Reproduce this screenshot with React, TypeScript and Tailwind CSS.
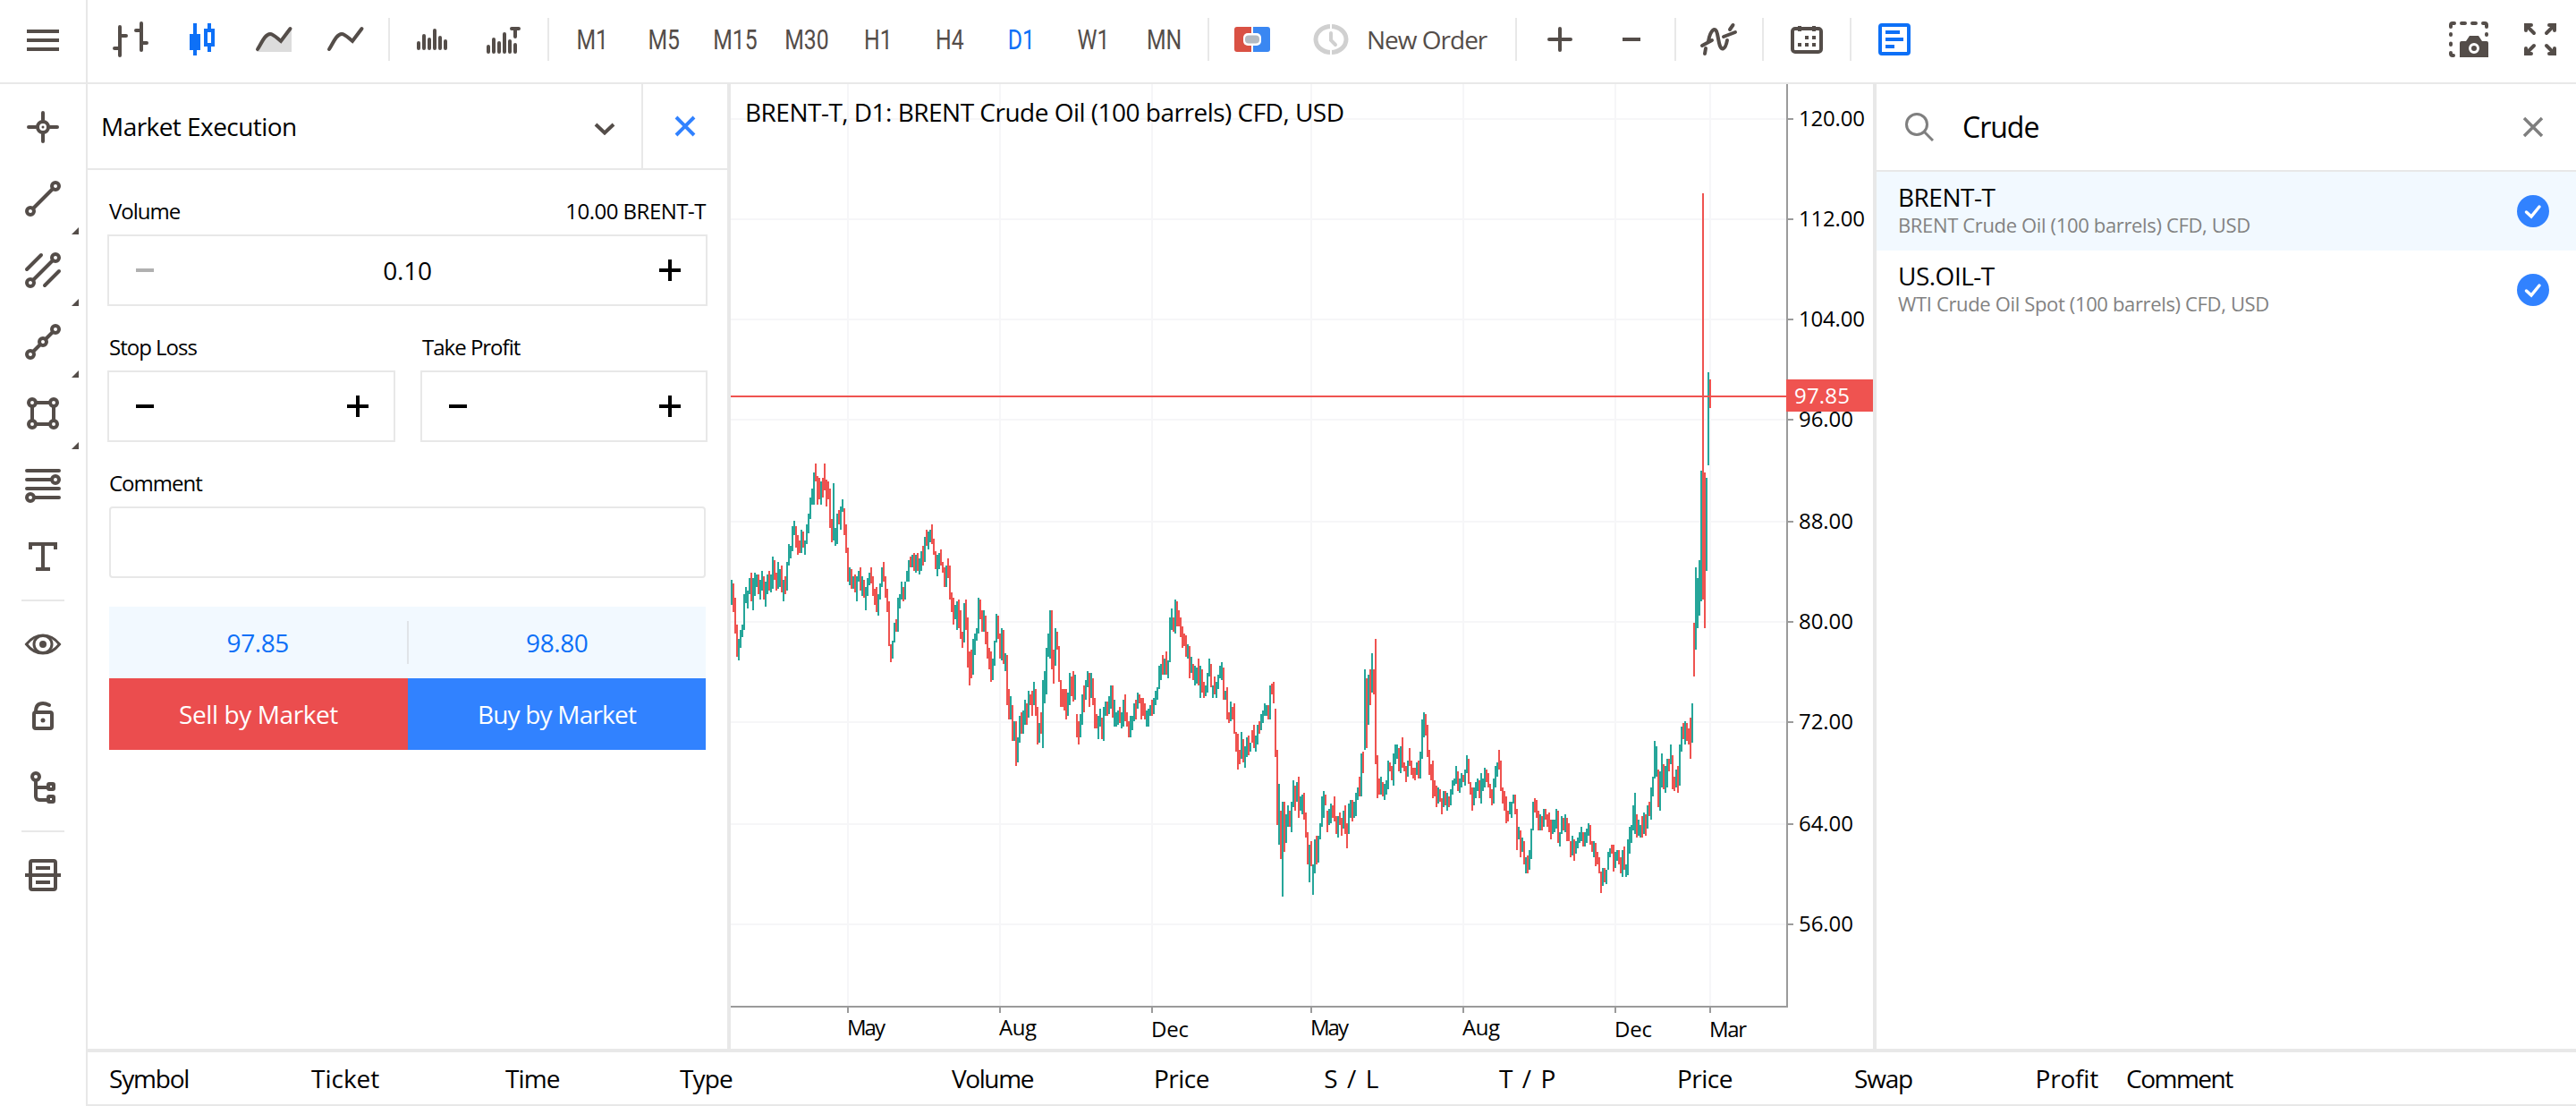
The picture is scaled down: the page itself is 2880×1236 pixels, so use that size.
import type { ReactNode } from "react";

type Segment = { x: number; y: number; bars: string };

// Daily bars, two pixels wide each. "g" closes up, "r" closes down; high and
// low are in thirds of a pixel below the segment's y.
const segments: Segment[] = [
  {
    x: 817,
    y: 480,
    bars: `g504:588 r516:612 r564:684 r654:762 g702:774 g672:732 g654:696 g552:672 g528:582 g540:600
      g498:552 r480:576 g498:606 g480:558 g486:528 r486:552 g504:570 g474:540 r492:570 g510:594
      g486:552 r474:540 g486:546 g426:534 r438:504 r480:540 g444:534 g468:528 r456:546 g504:576
      r492:552 g444:540 g384:456 g390:432 g324:408 g306:354 r324:396 r354:420 r372:414 g336:414
      r342:396 g372:420 g318:384 g282:348 g228:300 g198:252 g144:252 r114:174 r156:252 r162:234
      g174:252 r162:228 r114:204 r168:258 r174:234 r198:330 r300:378 g180:372 g330:390 g282:384
      r270:318 g258:336 g234:276 r264:354 r318:414 r396:510 g462:522 r468:534 g492:534 r486:546
      g492:576 g474:510 r462:540 g492:558 r504:564 g528:606 g498:558 g480:522 r462:516 r492:558
      r534:588 r528:612 g552:624 g516:570 g462:528 r444:510 r492:564 r534:612 r576:726 r720:780
      g708:768 g648:714 r636:678 g564:678 g552:600 g510:570 r528:576 g510:570 g474:510 g438:510
      r426:462 g420:462 r414:474 g420:480 r414:474 g432:486 g408:474 r390:456 g360:444 r336:390
      g342:402 g336:378 r318:384 r366:420 r408:468 g420:492 g414:468 r402:456 r444:480 r462:528
      g456:528 r432:498 r456:570 r546:612 r564:654 g588:636 g576:672 r570:666 r606:702 r678:732
      g582:714 r570:672 r630:798 r744:858 r738:834 g702:822 g684:756 g666:708 g564:684 r570:636
      r606:678 g606:678 r624:720 r678:768 r732:804 r744:846 g768:840 g708:792 g618:714 r624:702
      r684:768 g666:774 r672:786 g750:810 r756:924 r870:972 g894:972 r924:1044 g978:1044 r978:1128
      g1032:1116 g960:1050 r948:1020 g942:1020 g906:990 r918:990 g876:966 r888:924 r876:960 g846:924
      r870:960 r930:1056 g984:1050 r948:1020 g840:1068 g810:918 g732:888 g684:762 g606:768 r606:804
      r738:852 g666:792 r678:738 r726:846 r840:930 r870:930 r870:942 r870:972 g882:960 g816:924
      r828:894 r810:912 g822:906 r954:1032 r978:1056`,
  },
  {
    x: 1207,
    y: 640,
    bars: `g474:552 g408:510 r378:468 g360:426 g330:384 r336:450 g336:420 r354:444 r420:522 r474:522
      g480:558 g456:516 r486:558 g450:564 g432:480 r432:480 g414:474 g378:456 r378:486 g426:516
      g468:516 g462:510 r450:504 g468:522 g426:516 r408:498 r468:516 r498:552 g480:552 g480:528
      g438:498 r426:492 g402:456 r408:438 r420:492 r420:480 r438:492 g462:516 g456:516 g444:480
      r426:480 g420:474 g396:444 g384:426 g312:390 g306:360 r276:342 g288:342 r264:342 g294:354
      g150:300 g120:192 r150:198 g90:204 r96:180 r126:180 r150:216 r180:252 r204:246 r210:282
      g240:288 r246:354 g282:336 r306:360 g312:378 g318:372 r288:378 g312:420 r324:402 r366:420
      g378:414 g336:402 g288:348 r306:384 g378:420 r348:408 g366:420 g342:390 g312:354 g300:360
      r318:426 g396:426 r384:492 r468:504 g432:498 r450:492 r438:540 r534:600 r540:660 r594:642
      g534:624 r558:636 g582:654 g552:618 r546:612 g570:600 r528:570 r510:588 g546:600 g510:576
      r498:540 g474:528 g462:504 g438:480 g444:480 r444:492 g378:492 r372:408 r366:438 r456:618
      r594:846 g708:912 r798:960 g768:1086 r768:936 g810:906 g780:852 r798:852 g768:870 g696:786
      r714:798 g702:768 r684:822 g750:798 g744:810 r738:828 r804:888 r870:978 g912:1038 r900:984
      g978:1080 g894:1008 r882:978 g882:972 g840:894 g750:852 g732:822 r744:780 r798:870 g792:846
      g774:840 r780:822 r750:834 r816:876 g816:888 r804:846 r822:882 g798:858 r780:876 r840:924
      g774:876 g762:822 r762:834 g768:822 g738:816 g720:762 r684:750 g606:750 r600:672 g324:594
      r354:588 g342:510 r324:444 g270:402 r324:408 r222:642 r612:756 r690:744 g684:744 r702:750
      g708:762 g696:744`,
  },
  {
    x: 1551,
    y: 680,
    bars: `g510:606 r516:546 r528:576 g486:594 g456:522 g456:504 r468:546 g462:552 r432:534 r516:546
      r528:582 g510:564 r468:528 r510:558 r534:570 r534:576 g516:558 r510:570 g480:570 g372:504
      g348:432 r354:426 r390:498 r474:558 r522:576 r510:636 r576:630 r594:666 g600:654 r606:648
      r636:690 g612:666 r612:660 g618:678 r630:666 g606:660 g576:624 g570:594 g528:588 r546:612
      g570:618 g552:600 r558:582 g540:594 g492:552 r504:588 r582:624 r600:678 g600:660 g582:636
      g570:612 r576:636 g552:654 g570:612 g534:600 r540:582 r552:600 r588:636 r606:660 g570:654
      g528:600 g516:564 r474:540 r510:612 r600:654 r612:678 r630:720 r678:714 g648:690 g648:702
      g624:654 r624:690 r672:810 g732:774 r744:834 g768:816 r780:858 g834:888 r828:888 g810:876
      g738:840 g648:744 r636:684 r642:702 r678:744 g690:744 r696:744 g672:732 r672:708 r690:732
      r684:750 r708:774 g708:756 g708:750 g672:738 r678:786 g750:798 g696:756 r702:744 g690:750
      r702:780 r720:780 r780:834 g762:828 r774:846 g780:822 g768:804 g750:786 g732:780 r750:798
      g750:798 g738:786 g720:762 r726:792 r780:816 g780:834 r786:864 r816:858 r834:888 r882:954
      g870:930 r870:918 g876:924 g816:876 g804:834 r792:822 r792:882 g816:870 g810:846 r810:858
      r834:888 g810:900 r798:876 g858:900 g774:894 g732:822 g726:786 g660:744 g618:756 r690:768
      g708:762 g726:768 r696:768 g684:756 r690:762 g660:738 r648:696 g600:708 g564:630 g444:570
      g462:564 r540:666 g546:678 g486:600 r522:606 g528:618 g504:600 r504:546 g456:522 r492:606
      r564:612 g540:600 r528:618 g456:594 g396:480 r384:438 g378:456 r384:444 r402:456 r366:504
      g318:450 r48:228 g-138:138 g-102:66 g-162:24 g-462:-24 r-1392:-30 r-456:66 g-438:-126
      g-792:-480 r-768:-672`,
  },
];

const priceTicks = [
  { y: 133, label: "120.00" },
  { y: 245, label: "112.00" },
  { y: 357, label: "104.00" },
  { y: 469, label: "96.00" },
  { y: 583, label: "88.00" },
  { y: 695, label: "80.00" },
  { y: 807, label: "72.00" },
  { y: 921, label: "64.00" },
  { y: 1033, label: "56.00" },
];

const timeTicks = [
  { x: 948, label: "May", base: 1157 },
  { x: 1118, label: "Aug", base: 1157 },
  { x: 1288, label: "Dec", base: 1159 },
  { x: 1466, label: "May", base: 1157 },
  { x: 1636, label: "Aug", base: 1157 },
  { x: 1806, label: "Dec", base: 1159 },
  { x: 1912, label: "Mar", base: 1159 },
];

const timeframes = ["M1", "M5", "M15", "M30", "H1", "H4", "D1", "W1", "MN"];

const symbols = [
  { name: "BRENT-T", description: "BRENT Crude Oil (100 barrels) CFD, USD", active: true },
  { name: "US.OIL-T", description: "WTI Crude Oil Spot (100 barrels) CFD, USD", active: false },
];

function Icon({ children, className = "" }: { children: ReactNode; className?: string }) {
  return (
    <svg
      viewBox="0 0 44 44"
      className={`size-11 shrink-0 ${className}`}
      fill="none"
      stroke="currentColor"
      strokeWidth={4}
      strokeLinecap="round"
    >
      {children}
    </svg>
  );
}

function Tool({ children }: { children: ReactNode }) {
  return (
    <button className="flex h-[88px] w-20 shrink-0 items-center justify-center">{children}</button>
  );
}

function Divider() {
  return <div className="mx-2 mt-5 h-12 w-0.5 shrink-0 self-start bg-[#e8e8e8]" />;
}

function Toolbar() {
  return (
    <header className="flex h-[94px] items-start border-b-2 border-[#e8e8e8] pl-2">
      <Tool>
        <Icon>
          <path d="M10 8V40M10 18H17M4 32H10M34 4V34M28 12H34M34 26H40" />
        </Icon>
      </Tool>
      <Tool>
        <Icon className="text-[#0d70f7]">
          <path d="M8 16h12v18H8zM12 4h4v36h-4zM28 4h4v6h-4zM28 30h4v6h-4z" fill="currentColor" stroke="none" />
          <path d="M26 12h8v16h-8z" strokeLinecap="square" />
        </Icon>
      </Tool>
      <Tool>
        <Icon>
          <path d="M3 36C8 27 12 16 18 16C22 16 26 21 30 24L42 8V36Z" fill="#dcdcdc" stroke="none" />
          <path d="M4 33C8 27 12 16 18 16C22 16 26 21 30 24L40.5 10" />
        </Icon>
      </Tool>
      <Tool>
        <Icon>
          <path d="M4 33C8 27 12 16 18 16C22 16 26 21 30 24L40.5 10" />
        </Icon>
      </Tool>
      <Divider />
      <Tool>
        <Icon>
          <path d="M6 26V32M12 18V32M18 22V32M24 12V32M30 20V32M36 24V32" />
        </Icon>
      </Tool>
      <Tool>
        <Icon>
          <path d="M4 30V36M10 22V36M16 26V36M22 16V36M28 24V36M34 28V36M30 10H38M34 10V19" />
        </Icon>
      </Tool>
      <Divider />
      {timeframes.map((tf) => (
        <button
          key={tf}
          className={`h-[90px] w-20 shrink-0 font-[Roboto] text-[31px] ${tf === "D1" ? "text-[#0d70f7]" : ""}`}
        >
          <span className="inline-block scale-x-[0.8]">{tf}</span>
        </button>
      ))}
      <Divider />
      <Tool>
        <Icon>
          <g stroke="none">
            <path d="M5 8H21V36H5a3 3 0 0 1-3-3V11a3 3 0 0 1 3-3z" fill="#d95144" />
            <path d="M23 8H39a3 3 0 0 1 3 3V33a3 3 0 0 1-3 3H23z" fill="#3a87f2" />
            <rect x="12" y="15" width="20" height="14" rx="5" fill="#fff" />
            <rect x="14" y="17.500" width="16" height="9" rx="4" fill="#b4bac1" />
          </g>
        </Icon>
      </Tool>
      <button className="flex h-[88px] w-[246px] shrink-0 items-center pl-[26px] text-[28px] tracking-[-1px]">
        <Icon className="text-[#d0d0d0]">
          <ellipse cx="22" cy="22" rx="17" ry="14.500" strokeWidth="5" />
          <path d="M22 3V10M22 34V41" stroke="#fff" strokeWidth="2" strokeLinecap="butt" />
          <path d="M22 15V23L27 28" strokeWidth="4" />
        </Icon>
        <span className="ml-[18px]">New Order</span>
      </button>
      <Divider />
      <Tool>
        <Icon>
          <path d="M10 22H34M22 10V34" />
        </Icon>
      </Tool>
      <Tool>
        <Icon>
          <path d="M12 22H32" strokeLinecap="butt" />
        </Icon>
      </Tool>
      <Divider />
      <Tool>
        <Icon>
          <path d="M3 29L14 23M7 32L6 38M10 24C12 12 18 6 20 16L22 26C24 36 29 34 31 23M27 19L40 14M34 11L37.500 6" />
        </Icon>
      </Tool>
      <Divider />
      <Tool>
        <Icon>
          <rect x="6" y="10" width="32" height="26" rx="3" />
          <path d="M14 7V13M30 7V13" strokeLinecap="butt" />
          <path d="M20 20h4M28 20h4M12 28h4M20 28h4M28 28h4" strokeLinecap="butt" />
        </Icon>
      </Tool>
      <Divider />
      <Tool>
        <Icon className="text-[#0d70f7]">
          <rect x="6" y="6" width="32" height="32" rx="2" />
          <path d="M12 14H28M12 22H32M12 30H22" strokeLinecap="butt" />
        </Icon>
      </Tool>
      <div className="ml-auto flex">
        <Tool>
          <Icon>
            <path d="M2 8V6a2 2 0 0 1 2-2H6M14 4H18M26 4H30M38 4H40a2 2 0 0 1 2 2V8M2 16V17M2 26.500V28M2 37V38a2 2 0 0 0 2 2H5M42 16V17" />
            <path d="M14 24H19L23 18H33L37 24H42a2 2 0 0 1 2 2V42H12V26a2 2 0 0 1 2-2z" fill="currentColor" stroke="none" />
            <circle cx="28" cy="32" r="4.500" stroke="#fff" strokeWidth="3" />
          </Icon>
        </Tool>
        <Tool>
          <Icon>
            <path d="M6 6L15 15M38 6L29 15M6 38L15 29M38 38L29 29" />
            <path d="M6 12V6H12M32 6H38V12M6 32V38H12M32 38H38V32" />
          </Icon>
        </Tool>
      </div>
    </header>
  );
}

function DrawTool({ children, more = false }: { children: ReactNode; more?: boolean }) {
  return (
    <button className="relative flex h-20 w-24 shrink-0 items-center justify-center">
      {children}
      {more && (
        <svg viewBox="0 0 8 8" className="absolute right-2 bottom-0 size-2">
          <path d="M8 0V8H0Z" fill="currentColor" />
        </svg>
      )}
    </button>
  );
}

function Sidebar() {
  return (
    <aside className="flex w-[98px] shrink-0 flex-col border-r-2 border-[#e8e8e8]">
      <button className="flex h-[94px] w-24 shrink-0 items-start justify-center border-b-2 border-[#e8e8e8] pt-[23px]">
        <Icon>
          <path d="M4 12H40M4 22H40M4 32H40" strokeLinecap="butt" />
        </Icon>
      </button>
      <div className="h-2" />
      <DrawTool>
        <Icon>
          <circle cx="22" cy="22" r="6" />
          <circle cx="22" cy="22" r="1.500" fill="currentColor" stroke="none" />
          <path d="M22 6V14M22 30V38M6 22H14M30 22H38" />
        </Icon>
      </DrawTool>
      <DrawTool more>
        <Icon>
          <path d="M11 33L33 11" />
          <circle cx="36" cy="8" r="4" />
          <circle cx="8" cy="36" r="4" />
        </Icon>
      </DrawTool>
      <DrawTool more>
        <Icon>
          <path d="M11 33L33 11M4 21L20 5M24 39L40 23" />
          <circle cx="36" cy="8" r="4" />
          <circle cx="8" cy="36" r="4" />
        </Icon>
      </DrawTool>
      <DrawTool more>
        <Icon>
          <path d="M11 33L19 25M25 19L33 11" />
          <circle cx="36" cy="8" r="4" />
          <circle cx="22" cy="22" r="4" />
          <circle cx="8" cy="36" r="4" />
        </Icon>
      </DrawTool>
      <DrawTool more>
        <Icon>
          <path d="M14 10H30M14 34H30M10 14V30M34 14V30" />
          <circle cx="10" cy="10" r="4" />
          <circle cx="34" cy="10" r="4" />
          <circle cx="10" cy="34" r="4" />
          <circle cx="34" cy="34" r="4" />
        </Icon>
      </DrawTool>
      <DrawTool>
        <Icon>
          <path d="M4 6H40M4 16H31M4 26H40M13 36H40" />
          <circle cx="36" cy="16" r="4" />
          <circle cx="8" cy="36" r="4" />
        </Icon>
      </DrawTool>
      <DrawTool>
        <Icon>
          <path d="M8 14V8H36V14M22 8V36M14 36H30" strokeLinecap="butt" />
        </Icon>
      </DrawTool>
      <div className="mx-6 my-2 h-0.5 w-12 bg-[#e8e8e8]" />
      <DrawTool>
        <Icon>
          <path d="M3.500 22C9 15 15 12 22 12S35 15 40.500 22C35 29 29 32 22 32S9 29 3.500 22Z" strokeWidth="3" />
          <ellipse cx="22" cy="22" rx="10" ry="9.500" strokeWidth="3" />
          <circle cx="22" cy="22" r="4" fill="currentColor" stroke="none" />
        </Icon>
      </DrawTool>
      <DrawTool>
        <Icon>
          <rect x="12" y="18" width="20" height="18" rx="2" />
          <path d="M14 17C14 11 17 8 22 8C25 8 27 9 29 10" />
          <circle cx="22" cy="27" r="2.500" fill="currentColor" stroke="none" />
        </Icon>
      </DrawTool>
      <DrawTool>
        <Icon>
          <circle cx="14" cy="10" r="4" />
          <path d="M14 15V32a4 4 0 0 0 4 4H26M15 22H26" />
          <rect x="28" y="18" width="6" height="6" rx="1" />
          <rect x="28" y="32" width="6" height="6" rx="1" />
        </Icon>
      </DrawTool>
      <div className="mx-6 my-2 h-0.5 w-12 bg-[#e8e8e8]" />
      <DrawTool>
        <Icon>
          <rect x="8" y="6" width="28" height="32" rx="2" />
          <path d="M2 22H42M14 14H30M14 30H30" strokeLinecap="butt" />
        </Icon>
      </DrawTool>
    </aside>
  );
}

function Sign({ plus = false, muted = false }: { plus?: boolean; muted?: boolean }) {
  return (
    <svg viewBox="0 0 24 24" className={`size-6 ${muted ? "text-[#b0b0b0]" : "text-black"}`}>
      <path d={plus ? "M0 12H24M12 0V24" : "M2 12H22"} stroke="currentColor" strokeWidth="4" />
    </svg>
  );
}

function Stepper({ value, muted }: { value?: string; muted?: boolean }) {
  return (
    <div className="flex h-20 items-center justify-between border-2 border-[#e8e8e8] px-7 text-[28px] tracking-[-0.2px]">
      <Sign muted={muted} />
      <span>{value}</span>
      <Sign plus />
    </div>
  );
}

function FieldLabel({ children }: { children: ReactNode }) {
  return <div className="mb-1.5 pl-0.5 text-[24px] leading-10 tracking-[-1px]">{children}</div>;
}

function OrderPanel() {
  return (
    <section className="flex w-[719px] shrink-0 flex-col border-r-4 border-[#e8e8e8] text-black">
      <div className="flex h-24 items-stretch border-b-2 border-[#e8e8e8]">
        <div className="flex flex-1 items-center justify-between pr-[29px] pl-[15px] text-[28px] tracking-[-0.55px]">
          Market Execution
          <svg viewBox="0 0 24 14" className="mt-1.5 h-3.5 w-6" fill="none">
            <path d="M2 2L12 11.500L22 2" stroke="#544d49" strokeWidth="4" />
          </svg>
        </div>
        <button className="flex w-24 items-center justify-center border-l-2 border-[#e8e8e8]">
          <svg viewBox="0 0 24 24" className="size-6">
            <path d="M2 2L22 22M22 2L2 22" stroke="#3182ff" strokeWidth="4" />
          </svg>
        </button>
      </div>

      <div className="flex w-[693px] flex-col pt-[26px] pl-[22px]">
        <div className="flex justify-between">
          <FieldLabel>Volume</FieldLabel>
          <div className="pr-0.5 text-[24px] leading-10 tracking-[-0.5px]">10.00 BRENT-T</div>
        </div>
        <Stepper value="0.10" muted />

        <div className="mt-[26px] flex gap-7">
          <div className="w-[322px]">
            <FieldLabel>Stop Loss</FieldLabel>
            <Stepper />
          </div>
          <div className="w-[321px]">
            <FieldLabel>Take Profit</FieldLabel>
            <Stepper />
          </div>
        </div>

        <div className="mt-[26px]">
          <FieldLabel>Comment</FieldLabel>
          <input className="mx-0.5 block h-20 w-[667px] rounded border-2 border-[#e8e8e8]" />
        </div>

        <div className="mx-0.5 mt-8 text-[28px] tracking-[-0.4px]">
          <div className="flex h-20 items-center bg-[#f2f9ff] text-center text-[#0d70f7]">
            <div className="flex-1">97.85</div>
            <div className="h-12 w-0.5 bg-[#e0e4e8]" />
            <div className="flex-1">98.80</div>
          </div>
          <div className="flex h-20 text-white">
            <button className="w-[334px] bg-[#eb4d4e]">Sell by Market</button>
            <button className="w-[333px] bg-[#3182ff] tracking-[-0.8px]">Buy by Market</button>
          </div>
        </div>
      </div>
    </section>
  );
}

function Chart() {
  return (
    <svg
      viewBox="817 94 1277 1078"
      className="h-[1078px] w-[1277px] shrink-0 text-[24px] text-black"
      fill="currentColor"
    >
      <g shapeRendering="crispEdges">
        {priceTicks.map((t) => (
          <g key={t.y}>
            <rect x="817" y={t.y - 1} width="1180" height="2" fill="#f6f6f8" />
            <rect x="1999" y={t.y - 1} width="6" height="2" fill="#9b9b9b" />
          </g>
        ))}
        {timeTicks.map((t) => (
          <g key={t.x}>
            <rect x={t.x - 1} y="94" width="2" height="1030" fill="#f6f6f8" />
            <rect x={t.x - 1} y="1126" width="2" height="6" fill="#9b9b9b" />
          </g>
        ))}
        {segments.map((segment) =>
          segment.bars.split(/\s+/).map((bar, i) => {
            const [high, low] = bar.slice(1).split(":").map(Number);
            return (
              <rect
                key={`${segment.x}-${i}`}
                x={segment.x + i * 2}
                y={segment.y + high / 3}
                width="2"
                height={(low - high) / 3}
                fill={bar[0] === "g" ? "#26a69a" : "#ef5350"}
              />
            );
          }),
        )}
        <rect x="817" y="1124" width="1182" height="2" fill="#9b9b9b" />
        <rect x="1997" y="94" width="2" height="1032" fill="#9b9b9b" />
        <rect x="817" y="442" width="1180" height="2" fill="#ef5350" />
      </g>

      <text x="833" y="136" fontSize="28" textLength="670">
        BRENT-T, D1: BRENT Crude Oil (100 barrels) CFD, USD
      </text>
      {priceTicks.map((t) => (
        <text key={t.label} x="2011" y={t.y + 8} textLength={t.label.length === 6 ? 74 : 61}>
          {t.label}
        </text>
      ))}
      <rect x="1997" y="424" width="97" height="36" fill="#ef5350" />
      <text x="2006" y="451" fill="#fff" textLength="62">
        97.85
      </text>
      {timeTicks.map((t) => (
        <text key={t.x} x={t.x - 1} y={t.base} textLength={t.label === "May" ? 43 : 42}>
          {t.label}
        </text>
      ))}
    </svg>
  );
}

function Watchlist() {
  return (
    <section className="flex flex-1 flex-col border-l-4 border-[#e8e8e8]">
      <div className="flex h-[98px] items-center border-b-2 border-[#e8e8e8] pr-9 pl-8 text-[#7f7f7f]">
        <svg viewBox="0 0 32 32" className="size-8" fill="none" stroke="currentColor" strokeWidth="3">
          <circle cx="13" cy="13" r="11.500" />
          <path d="M21 21L31 31" />
        </svg>
        <div className="ml-8 flex-1 text-[32px] tracking-[-1px] text-black">Crude</div>
        <svg viewBox="0 0 24 24" className="size-6" stroke="currentColor" strokeWidth="3.500">
          <path d="M2 2L22 22M22 2L2 22" />
        </svg>
      </div>
      {symbols.map((s) => (
        <div
          key={s.name}
          className={`flex h-[88px] items-center justify-between pr-[30px] pl-6 ${s.active ? "bg-[#f2f9ff]" : ""}`}
        >
          <div className="pb-[3px]">
            <div className="text-[28px] leading-9 tracking-[-0.5px] text-black">{s.name}</div>
            <div className="-mt-[3px] text-[22px] leading-8 tracking-[-0.35px] text-[#828282]">{s.description}</div>
          </div>
          <svg viewBox="0 0 36 36" className="size-9" fill="none">
            <circle cx="18" cy="18" r="18" fill="#3182ff" />
            <path d="M10.500 19L16 24L25 13" stroke="#fff" strokeWidth="3.500" strokeLinecap="round" />
          </svg>
        </div>
      ))}
    </section>
  );
}

function PositionsHeader() {
  return (
    <footer className="grid h-16 grid-cols-[250px_217px_195px_200px_195px_197px_191px_198px_196px_201px_208px_1fr] items-center border-t-4 border-b-2 border-[#e8e8e8] text-[28px] tracking-[-0.9px] text-black">
      <div className="pl-6 tracking-[-1.2px]">Symbol</div>
      <div className="tracking-normal">Ticket</div>
      <div>Time</div>
      <div>Type</div>
      <div className="text-right tracking-[-1.4px]">Volume</div>
      <div className="text-right tracking-[-0.5px]">Price</div>
      <div className="text-right tracking-[1.6px]">S / L</div>
      <div className="text-right tracking-[1.6px]">T / P</div>
      <div className="text-right tracking-[-0.5px]">Price</div>
      <div className="text-right tracking-[-1.2px]">Swap</div>
      <div className="text-right tracking-[-0.2px]">Profit</div>
      <div className="pl-[31px] tracking-[-1.5px]">Comment</div>
    </footer>
  );
}

export default function App() {
  return (
    <div className="flex h-[1236px] w-full overflow-hidden bg-white font-['Open_Sans',sans-serif] text-[#544d49]">
      <Sidebar />
      <div className="flex flex-1 flex-col">
        <Toolbar />
        <main className="flex h-[1078px]">
          <OrderPanel />
          <Chart />
          <Watchlist />
        </main>
        <PositionsHeader />
      </div>
    </div>
  );
}
